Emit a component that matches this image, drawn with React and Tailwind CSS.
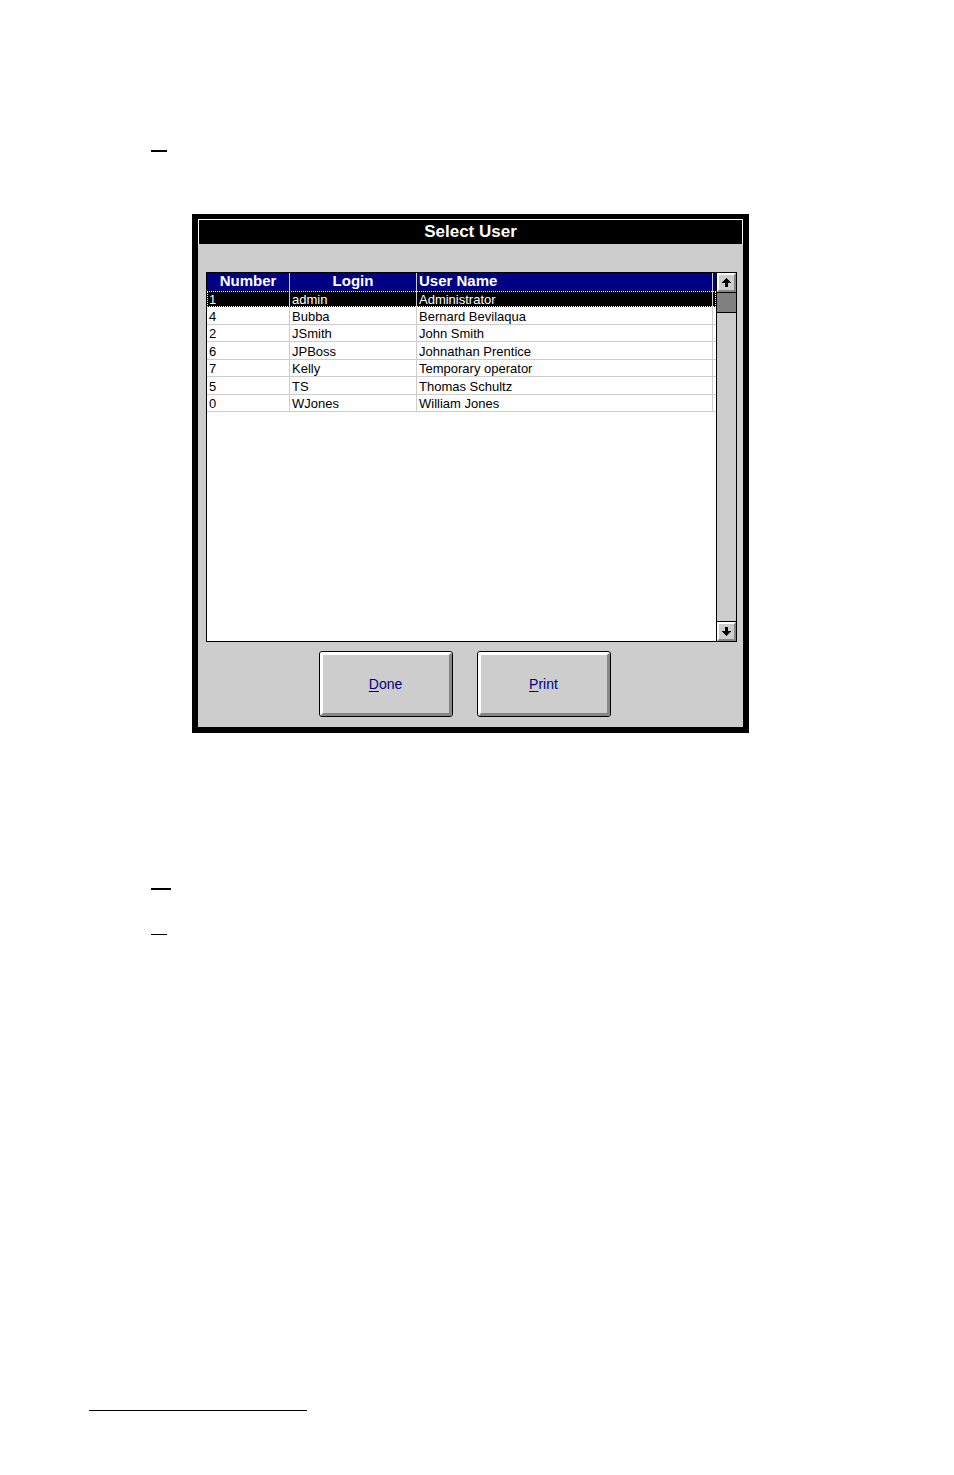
const users = [
  { number: 1, login: "admin", name: "Administrator" },
  { number: 4, login: "Bubba", name: "Bernard Bevilaqua" },
  { number: 2, login: "JSmith", name: "John Smith" },
  { number: 6, login: "JPBoss", name: "Johnathan Prentice" },
  { number: 7, login: "Kelly", name: "Temporary operator" },
  { number: 5, login: "TS", name: "Thomas Schultz" },
  { number: 0, login: "WJones", name: "William Jones" },
]

function ScrollButton({ label, down }) {
  return (
    <button
      type="button"
      aria-label={label}
      className="flex h-[19px] w-full shrink-0 items-center justify-center border-2 border-t-white border-l-white border-r-[#868686] border-b-[#868686] bg-[#cdcdcd]"
    >
      <svg viewBox="0 0 9 9" className={down ? "size-[9px] rotate-180" : "size-[9px]"} shapeRendering="crispEdges">
        <path d="M4 0h1v1h1v1h1v1h1v1h1v1H6v4H3V5H0V4h1V3h1V2h1V1h1z" fill="#000" />
      </svg>
    </button>
  )
}

function ScrollBar() {
  return (
    <div className="flex w-5 shrink-0 flex-col border-l border-black bg-[#cdcdcd]">
      <ScrollButton label="Scroll up" />
      <div className="h-[21px] shrink-0 border-y border-black bg-[#808080]" />
      <div className="grow border-b border-black" />
      <ScrollButton label="Scroll down" down />
    </div>
  )
}

function UserTable() {
  return (
    <table className="w-full table-fixed border-separate border-spacing-0 text-left">
      <colgroup>
        <col className="w-[83px]" />
        <col className="w-[127px]" />
        <col />
        <col className="w-[3px]" />
      </colgroup>
      <thead>
        <tr className="h-[18px] bg-[#000084] text-[15px] leading-4 text-white">
          <th className="border-r border-[#cdcdcd] p-0 pb-0.5 text-center">Number</th>
          <th className="border-r border-[#cdcdcd] p-0 pb-0.5 text-center">Login</th>
          <th className="border-r border-[#cdcdcd] p-0 pb-0.5 pl-0.5">User Name</th>
          <td className="p-0" />
        </tr>
      </thead>
      <tbody className="text-[13px]">
        {users.map((user, i) => (
          <UserRow key={user.number} user={user} selected={i === 0} />
        ))}
      </tbody>
    </table>
  )
}

function UserRow({ user, selected }) {
  const row = selected
    ? "h-4 bg-black leading-[15px] text-white outline-1 outline-dotted -outline-offset-1 outline-white"
    : "h-[18px] leading-[15px] text-black odd:h-[17px]"
  const cell = selected
    ? "border-r border-[#cdcdcd] p-0 pl-0.5"
    : "border-r border-b border-[#cdcdcd] p-0 pt-px pl-0.5"

  return (
    <tr className={row}>
      <td className={cell}>{user.number}</td>
      <td className={cell}>{user.login}</td>
      <td className={cell}>{user.name}</td>
      <td className={selected ? "p-0" : "border-b border-[#cdcdcd] p-0"} />
    </tr>
  )
}

function PushButton({ accessKey, children }) {
  return (
    <button
      type="button"
      className="h-[66px] w-[134px] overflow-hidden rounded-[3px] border border-black bg-[#cdcdcd] text-sm text-[#000084]"
    >
      <span className="flex h-full items-center justify-center rounded-xs border-3 border-t-white border-l-white border-r-[#868686] border-b-[#868686]">
        <span>
          <span className="underline underline-offset-2">{accessKey}</span>
          {children}
        </span>
      </span>
    </button>
  )
}

function SelectUserWindow() {
  return (
    <section className="border-6 border-t-[5px] border-black bg-[#cdcdcd]">
      <h1 className="border border-b-0 border-white bg-black text-center text-[17px] leading-6 font-bold text-white">
        Select User
      </h1>
      <div className="pt-7 pr-1.5 pb-2.5 pl-2">
        <div className="flex h-[370px] border border-black bg-white">
          <div className="min-w-0 grow">
            <UserTable />
          </div>
          <ScrollBar />
        </div>
        <div className="mt-[9px] flex justify-center gap-6 pr-3.5">
          <PushButton accessKey="D">one</PushButton>
          <PushButton accessKey="P">rint</PushButton>
        </div>
      </div>
    </section>
  )
}

export default function App() {
  return (
    <main className="bg-white pt-[150px] pb-16 font-['Liberation_Sans',Arial,sans-serif]">
      <hr className="ml-[151px] w-4 border-t-2 border-black" />
      <div className="mt-[62px] mr-[205px] ml-48">
        <SelectUserWindow />
      </div>
      <hr className="mt-[155px] ml-[151px] w-5 border-t-2 border-black" />
      <hr className="mt-11 ml-[151px] w-4 border-black" />
      <hr className="mt-[475px] ml-[89px] w-[218px] border-black" />
    </main>
  )
}
